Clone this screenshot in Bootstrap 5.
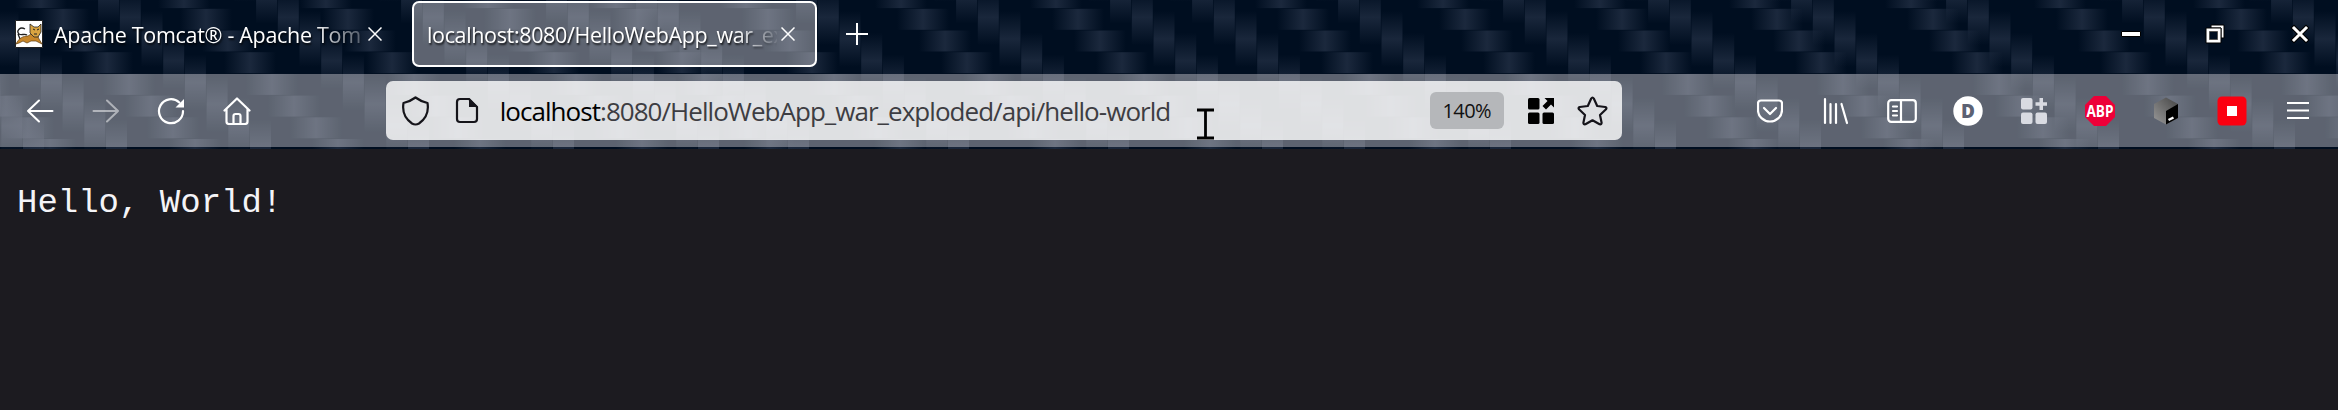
<!DOCTYPE html>
<html lang="en">
<head>
<meta charset="utf-8">
<meta name="viewport" content="width=device-width, initial-scale=1">
<title>localhost:8080/HelloWebApp_war_exploded/api/hello-world</title>
<link href="https://cdn.jsdelivr.net/npm/bootstrap@5.3.0/dist/css/bootstrap.min.css" rel="stylesheet">
<style>
  body { background: #1c1b20; font-family: "Open Sans", "Noto Sans", sans-serif; overflow: hidden; }
  .chrome { height: 149px; background: #000e20; isolation: isolate; }
  .weave { top: 0; left: 0; width: 2338px; height: 149px; z-index: -1; }
  .tabstrip { height: 74px; color: #fff; }
  .tab-item { height: 66px; margin-top: 1px; font-size: 21.5px; text-shadow: 1px 2px 2px #000c; }
  .tab-item.plain { width: 412px; padding-left: 15px; }
  .tab-item.current { width: 405px; padding-left: 13px; background: rgba(255,250,252,.365); border: 2px solid #fff; border-radius: 7px; }
  .tab-label { height: 32px; line-height: 34px; white-space: nowrap; }
  .plain .tab-label { width: 308px; margin-left: 11px; letter-spacing: -.3px; -webkit-mask-image: linear-gradient(90deg, #000 84%, transparent 106%); }
  .current .tab-label { width: 350px; letter-spacing: -.35px; -webkit-mask-image: linear-gradient(90deg, #000 88%, transparent 101%); }
  .tool-row { height: 73px; background: rgba(255,250,252,.365); color: #fff; }
  .tool-btn { width: 65.7px; height: 73px; display: flex; align-items: center; justify-content: center; flex: none; }
  .tool-btn.wide { width: 66px; }
  .address { width: 1236px; height: 59px; margin-left: 116px; border-radius: 7px; background: rgba(255,255,255,.8); color: #15141a; }
  .url { font-size: 26px; line-height: 42px; letter-spacing: -.96px; white-space: nowrap; color: #3d3d42; margin-left: 21px; width: 930px; padding-top: 1px; }
  .url b { font-weight: 400; color: #000; }
  .zoom-pill { width: 74px; height: 37px; border-radius: 6px; background: #b5b7ba; font-size: 20px; line-height: 37px; letter-spacing: -.6px; text-align: center; color: #111; }
  .win-btn { width: 84.5px; height: 68px; display: flex; align-items: center; justify-content: center; }
  .ibeam { left: 1196px; top: 108px; }
  .hello { margin: 0; padding: 34px 0 0 17px; font: 34px/40px "Courier New", "Liberation Mono", monospace; color: #f4f4f7; overflow: hidden; }
  svg { display: block; flex: none; }
</style>
</head>
<body>
<header class="chrome position-relative">
  <svg class="weave position-absolute" viewBox="0 0 2338 149" id="weave">
    <defs>
      <linearGradient id="gh"><stop offset="0" stop-color="#222f44" stop-opacity="0"/><stop offset=".5" stop-color="#222f44" stop-opacity=".8"/><stop offset="1" stop-color="#222f44" stop-opacity="0"/></linearGradient>
      <linearGradient id="gv" x2="0" y2="1"><stop offset="0" stop-color="#222f44" stop-opacity="0"/><stop offset=".5" stop-color="#222f44" stop-opacity=".75"/><stop offset="1" stop-color="#222f44" stop-opacity="0"/></linearGradient>
    </defs>
  </svg>
  <div class="tabstrip d-flex align-items-start">
    <div class="tab-item plain d-flex align-items-center">
      <svg width="28" height="28" viewBox="0 0 28 28"><path fill="#fff" stroke="#222" d="M.5.500h27v27H.5z"/><path d="M10 9C5 6 1 11 4 14c3 2 5-1 8 1M3 14l2 5" fill="none" stroke="#222" stroke-width="1.300"/><path d="M1 24c3-6 7-8 12-8l3-2h6l2 5 3 5-6-3-5 0-4 2-4-2-4 2z" fill="#c8872a" stroke="#5b3b10" stroke-width=".7"/><path d="M15 4l4 3h4l3-3v8l-3 5h-4l-4-4z" fill="#d9a441" stroke="#222" stroke-width=".8"/><path d="M18 9l2 1m4-1-2 1m-3 4h3" stroke="#222"/></svg>
      <div class="tab-label">Apache Tomcat® - Apache Tom</div>
      <svg style="margin-left:6px" width="14" height="14" viewBox="0 0 14 14" stroke="#fff" stroke-width="1.500"><path d="M.5.500l13 13m0-13-13 13"/></svg>
    </div>
    <div class="tab-item current d-flex align-items-center">
      <div class="tab-label">localhost:8080/HelloWebApp_war_ex</div>
      <svg class="ms-1" width="14" height="14" viewBox="0 0 14 14" stroke="#fff" stroke-width="1.500"><path d="M.5.500l13 13m0-13-13 13"/></svg>
    </div>
    <div class="win-btn" style="margin-left:-2px"><svg width="22" height="22" viewBox="0 0 22 22" stroke="#fff" stroke-width="2"><path d="M11 0v22M0 11h22"/></svg></div>
    <div class="d-flex ms-auto" style="margin-right:-4px">
      <div class="win-btn"><svg width="20" height="6" viewBox="0 0 20 6"><path d="M.5.500h19v5H.5z" fill="#fff" stroke="#000"/></svg></div>
      <div class="win-btn"><svg width="20" height="20" viewBox="0 0 20 20"><path d="M6 1h13v13h-3V4H6z" fill="#fff" stroke="#000"/><path d="M1 4h15v15H1z" fill="#fff" stroke="#000"/><path d="M4.500 7.500h8v8h-8z" fill="#000e20" stroke="#555"/></svg></div>
      <div class="win-btn"><svg width="20" height="20" viewBox="0 0 20 20" stroke-linecap="square"><path d="M4 4l12 12m0-12L4 16" stroke="#000" stroke-width="5"/><path d="M4 4l12 12m0-12L4 16" stroke="#fff" stroke-width="3"/></svg></div>
    </div>
  </div>
  <div class="tool-row d-flex align-items-center">
    <div class="d-flex" style="padding-left:7px">
      <div class="tool-btn"><svg width="28" height="26" viewBox="0 0 28 26" fill="none" stroke="#fff" stroke-width="2" stroke-linecap="round" stroke-linejoin="round"><path d="M13 2.500 2 13l11 10.500M2 13h24.500"/></svg></div>
      <div class="tool-btn opacity-50"><svg width="28" height="26" viewBox="0 0 28 26" fill="none" stroke="#fff" stroke-width="2" stroke-linecap="round" stroke-linejoin="round"><path d="M15 2.500 26 13 15 23.500M26 13H1.500"/></svg></div>
      <div class="tool-btn"><svg width="28" height="28" viewBox="0 0 28 28" fill="none" stroke="#fff" stroke-width="2.200" stroke-linecap="round"><path d="M22.300 5.500A12 12 0 1 0 26 14"/><path d="M27 2v8.500h-8.500z" fill="#fff" stroke="none"/></svg></div>
      <div class="tool-btn"><svg width="28" height="28" viewBox="0 0 28 28" fill="none" stroke="#fff" stroke-width="2.200" stroke-linecap="round" stroke-linejoin="round"><path d="M1.500 13.500 14 1.500l12.500 12M3.500 12v12.500q0 2.500 2.500 2.500h16q2.500 0 2.500-2.500V12M10.500 27v-8q0-2 2-2h3q2 0 2 2v8"/></svg></div>
    </div>
    <div class="address d-flex align-items-center">
      <svg style="margin-left:15px" width="29" height="30" viewBox="0 0 29 30" fill="none" stroke="#15141a" stroke-width="2.200" stroke-linejoin="round"><path d="M14.500 1.500c4 3 8 4.500 12 5.500 1.500 9-2 16-8.500 20.500q-3.500 2-7 0C4.500 23 1 16 2.500 7c4-1 8-2.500 12-5.500z"/></svg>
      <svg style="margin-left:25px" width="24" height="27" viewBox="0 0 24 27" fill="none" stroke="#15141a" stroke-width="2.200" stroke-linejoin="round"><path d="M14 2H5Q2 2 2 5v17q0 3 3 3h14q3 0 3-3V10z"/><path d="M14 1v9h9z" fill="#15141a" stroke="none"/></svg>
      <div class="url"><b>localhost</b>:8080/HelloWebApp_war_exploded/api/hello-world</div>
      <div class="zoom-pill">140%</div>
      <svg style="margin-left:24px" width="26" height="26" viewBox="0 0 26 26"><rect width="11.500" height="11.500" rx="1.500"/><rect y="14.500" width="11.500" height="11.500" rx="1.500"/><rect x="14.500" y="14.500" width="11.500" height="11.500" rx="1.500"/><path d="M16.500 0H26v9.500l-3-3-5 5-3.500-3.500 5-5z"/></svg>
      <svg style="margin-left:23px" width="31" height="30" viewBox="0 0 31 30" fill="none" stroke="#15141a" stroke-width="2.200" stroke-linejoin="round"><path d="M14.200 2.500q1.300-2 2.600 0l3.400 7.500 8 1q2 .6.800 2.300l-6 5.700 1.600 7.800q0 2-2 1.500l-7.100-4-7.100 4q-2 .5-2-1.500L8 19l-6-5.700q-1.200-1.700.8-2.300l8-1z"/></svg>
    </div>
    <div class="d-flex ms-auto" style="margin-right:7px">
      <div class="tool-btn wide"><svg width="26" height="24" viewBox="0 0 26 24" fill="none" stroke="#fff" stroke-width="2.200" stroke-linecap="round" stroke-linejoin="round"><path d="M4 1.500h18q3 0 3 3V11a12 11.500 0 0 1-24 0V4.500q0-3 3-3z"/><path d="m7 9 6 6 6-6"/></svg></div>
      <div class="tool-btn wide"><svg width="26" height="28" viewBox="0 0 26 28" stroke="#fff" stroke-width="2.200" stroke-linecap="round"><path d="M2 2v24M7.500 7v19M13 7v19M18.500 7 24 26"/></svg></div>
      <div class="tool-btn wide"><svg width="30" height="24" viewBox="0 0 30 24" fill="none" stroke="#fff" stroke-width="2.200" stroke-linecap="round"><rect x="1.200" y="1.200" width="27.600" height="21.600" rx="3"/><path d="M14 2v20M6 7.500h4M6 12h4M6 16.500h4"/></svg></div>
      <div class="tool-btn wide"><svg width="30" height="30" viewBox="0 0 30 30"><circle cx="15" cy="15" r="14.700" fill="#fff"/><text x="15" y="22" text-anchor="middle" font-size="19" font-weight="800" fill="#5c6273">D</text></svg></div>
      <div class="tool-btn wide"><svg width="26" height="26" viewBox="0 0 26 26" fill="#d9dbe2"><rect width="11.500" height="11.500" rx="2"/><rect y="14.500" width="11.500" height="11.500" rx="2"/><rect x="14.500" y="14.500" width="11.500" height="11.500" rx="2"/><path d="M18.500 0h3.500v4.200h4v3.500h-4V12h-3.500V7.700h-4V4.200h4z"/></svg></div>
      <div class="tool-btn wide"><svg width="30" height="30" viewBox="0 0 30 30"><path d="M9 0h12l9 9v12l-9 9H9l-9-9V9z" fill="#ed0038"/><text x="15" y="20.500" text-anchor="middle" textLength="27" lengthAdjust="spacingAndGlyphs" font-size="16" font-weight="700" fill="#fff">ABP</text></svg></div>
      <div class="tool-btn wide"><svg width="24" height="28" viewBox="0 0 24 28"><defs><linearGradient id="cb" x1="1" y2="1" x2="0"><stop stop-color="#444"/><stop offset="1" stop-color="#999"/></linearGradient></defs><path d="M12 .5 24 7v14l-12 6.500L0 21V7z" fill="url(#cb)"/><path d="M12 14 24 7v14l-12 6.500z" fill="#000"/><path d="m14.500 23 5-2.500" stroke="#fff" stroke-width="2.500"/></svg></div>
      <div class="tool-btn wide"><svg width="30" height="30" viewBox="0 0 30 30"><rect x=".5" y=".5" width="29" height="29" rx="4.500" fill="#fb0010"/><path d="M10 10h10v10H10z" fill="#fff"/></svg></div>
      <div class="tool-btn wide"><svg width="22" height="20" viewBox="0 0 22 20" stroke="#fff" stroke-width="2.200"><path d="M0 2h22M0 9.500h22M0 17h22"/></svg></div>
    </div>
  </div>
  <svg class="ibeam position-absolute" width="20" height="32" viewBox="0 0 20 32" fill="none" stroke="#000" stroke-width="2.800"><path d="M1 2h17M1 30h17M9.500 2v28"/></svg>
</header>
<pre class="hello">Hello, World!</pre>
<script>
  // Carbon-fibre weave: diagonal chains of horizontal and vertical threads.
  const svg = document.getElementById('weave');
  function thread(cx, cy, w, h, fill) {
    const r = document.createElementNS('http://www.w3.org/2000/svg', 'rect');
    const a = { x: cx - w / 2, y: cy - h / 2, width: w, height: h, fill: `url(#${fill})` };
    for (const k in a) r.setAttribute(k, a[k]);
    svg.appendChild(r);
  }
  const across = [-60, 85, 228, 370, 532, 660, 790, 945, 1100, 1325, 1487, 1644, 1799, 1955, 2104, 2263];
  const down = [-75, 8, 152, 310, 455, 600, 690, 850, 1010, 1164, 1246, 1392, 1557, 1702, 1845, 2000, 2176, 2325];
  for (let k = -3; k < 6; k++) {
    across.forEach(x => thread(x + 22 * k, 41 + 21.7 * k, 52, 21, 'gh'));
    down.forEach(x => thread(x + 21.7 * k, 39 + 21.7 * k, 21, 56, 'gv'));
  }
</script>
<script src="https://cdn.jsdelivr.net/npm/bootstrap@5.3.0/dist/js/bootstrap.bundle.min.js"></script>
</body>
</html>
